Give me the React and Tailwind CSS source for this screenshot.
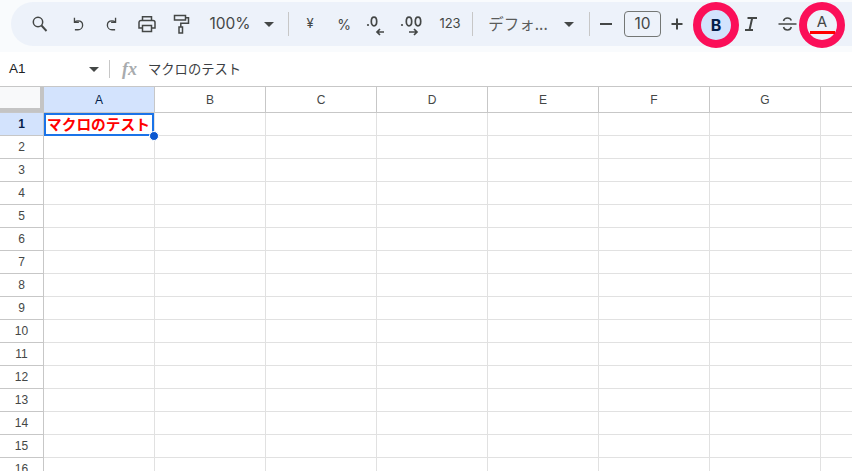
import React from "react";

const Ic = ({ children, w = 18, h = 18, vb = "0 0 18 18", fill = "none", sw = 1.5 }) => (
  <svg width={w} height={h} viewBox={vb} fill={fill} stroke={fill === "none" ? "#444746" : "none"} strokeWidth={sw}>{children}</svg>
);

const Cell = ({ w, children, className = "" }) => (
  <div style={{ width: w }} className={"flex h-full shrink-0 items-center justify-center " + className}>{children}</div>
);

const Sep = () => <div className="h-[24px] w-px shrink-0 bg-[#c7c7c7]" />;
const Caret = () => <div className="h-0 w-0 border-x-[5px] border-t-[5px] border-x-transparent border-t-[#444746]" />;

const Toolbar = () => (
  <div className="ml-[11px] flex h-[44px] items-center rounded-l-[22px] bg-[#edf2fa] pl-[12px] text-[#444746]">
    <Cell w={34}>
      <Ic w={18} h={18}><circle cx="7" cy="7" r="4.7" /><path d="M10.500 10.500 15.500 16" strokeWidth="1.900" /></Ic>
    </Cell>
    <Cell w={34} className="ml-[4px]">
      <Ic w={16} h={16} vb="0 0 18 18"><path d="M5 2v5h5" /><path d="M5.300 6.800C6.300 5.900 7.500 5.500 9 5.500c3 0 5.200 2 5.200 4.800S12 15.500 9 15.500H5.500" /></Ic>
    </Cell>
    <Cell w={34}>
      <Ic w={16} h={16} vb="0 0 18 18"><path d="M13 2v5H8" /><path d="M12.700 6.800C11.700 5.900 10.500 5.500 9 5.500c-3 0-5.200 2-5.200 4.800S6 15.500 9 15.500h3.500" /></Ic>
    </Cell>
    <Cell w={34} className="ml-[1px]">
      <Ic w={20} h={20} vb="0 0 20 20"><path d="M5.500 6.500V2.800h9v3.700" /><path d="M5 14H2V8.500A2 2 0 0 1 4 6.500h12a2 2 0 0 1 2 2V14H15" /><path d="M5.500 11.500h9v6h-9z" /></Ic>
    </Cell>
    <Cell w={34}>
      <Ic w={18} h={20} vb="0 0 18 20"><path d="M2.500 1.500h11v4.500h-11z" /><path d="M13.500 3.800H16.500V9.200H8.800V13" /><path d="M7 13h3.500v6H7z" /></Ic>
    </Cell>
    <Cell w={55} className="pl-[9px] font-['Inter',sans-serif]"><span className="text-[15.500px]">100%</span></Cell>
    <Cell w={32}><Caret /></Cell>
    <Cell w={7}><Sep /></Cell>
    <Cell w={36} className="text-[13px] font-['Inter',sans-serif]">¥</Cell>
    <Cell w={32} className="text-[14px] font-['Inter',sans-serif]">%</Cell>
    <Cell w={36}>
      <Ic w={26} h={24} vb="0 0 26 24" sw={1.5}>
        <circle cx="3" cy="13" r="1.100" fill="#444746" stroke="none" />
        <ellipse cx="9" cy="9.500" rx="2.700" ry="4.300" strokeWidth="1.700" />
        <path d="M20 21h-7M16 18l-3 3 3 3" strokeWidth="1.700" transform="translate(-1 -1)" />
      </Ic>
    </Cell>
    <Cell w={36}>
      <Ic w={30} h={24} vb="0 0 30 24" sw={1.5}>
        <circle cx="3" cy="13" r="1.100" fill="#444746" stroke="none" />
        <ellipse cx="10" cy="9.500" rx="2.700" ry="4.300" strokeWidth="1.700" />
        <ellipse cx="19" cy="9.500" rx="2.700" ry="4.300" strokeWidth="1.700" />
        <path d="M10 20h8M15 17l3 3-3 3" strokeWidth="1.700" />
      </Ic>
    </Cell>
    <Cell w={36} className="text-[13px] font-['Inter',sans-serif]">123</Cell>
    <Cell w={8}><Sep /></Cell>
    <Cell w={76} className="pl-[8px] text-[15.500px] font-['Noto_Sans_CJK_JP',sans-serif] text-[#5a5c5b]">デフォ...</Cell>
    <Cell w={33}><Caret /></Cell>
    <Cell w={8}><Sep /></Cell>
    <Cell w={26}><div className="h-[2px] w-[12px] bg-[#444746]" /></Cell>
    <div className="ml-[5px] flex h-[26px] w-[37px] shrink-0 items-center justify-center rounded-[4px] border border-[#747775] font-['Inter',sans-serif] text-[15.500px]">10</div>
    <Cell w={32}>
      <Ic w={12} h={12} vb="0 0 12 12" sw={2}><path d="M6 .5v11M.5 6h11" /></Ic>
    </Cell>
    <Cell w={41} />
    <Cell w={34}>
      <Ic w={14} h={16} vb="0 0 14 16" sw={2}><path d="M3.500 2h9.500M1 14h8M8.200 2 5.500 14" /></Ic>
    </Cell>
    <Cell w={38}>
      <Ic w={19} h={16} vb="0 0 19 16" sw={1.500}><path d="M.5 8h18M5.500 5C6 3 8 2 9.500 2s3.300 1 3.800 2.500M5.500 11C6 13 8 14 9.500 14s3.300-1 3.800-3" /></Ic>
    </Cell>
    <Cell w={32} />
  </div>
);

const Overlays = () => (
  <>
    <div className="absolute left-[693px] top-[2px] flex h-[46px] w-[46px] items-center justify-center rounded-full border-[8px] border-[#fb0f59] bg-[#d3e3fd]">
      <span className="text-[16px] font-bold font-['Inter',sans-serif] text-[#041e49]">B</span>
    </div>
    <div className="absolute left-[799px] top-[2px] flex h-[46px] w-[46px] flex-col items-center rounded-full border-[8px] border-[#fb0f59] bg-[#edf2fa]">
      <span className="mt-[3px] text-[15px] leading-[18px] font-['Inter',sans-serif] text-[#444746]">A</span>
      <div className="absolute left-[3px] top-[21px] h-[3px] w-[25px] bg-[#ff0000]" />
    </div>
  </>
);

const FormulaBar = () => (
  <div className="flex h-[34px] items-center text-[#202124]">
    <div className="w-[79px] pl-[9px] text-[13.500px] font-['Liberation_Sans',sans-serif]">A1</div>
    <div className="flex w-[30px] justify-center"><Caret /></div>
    <div className="h-[18px] w-px bg-[#c7c7c7]" />
    <span className="ml-[12px] w-[26px] font-['Liberation_Serif',serif] text-[18px] font-bold italic text-[#a8abae]">fx</span>
    <span className="text-[13.300px] font-['Noto_Sans_CJK_JP',sans-serif] text-[#3c4043]">マクロのテスト</span>
  </div>
);

const cols = ["A", "B", "C", "D", "E", "F", "G", ""];
const rows = Array.from({ length: 16 }, (_, i) => i + 1);

const Grid = () => (
  <div className="border-t border-[#c7c7c7] font-['Liberation_Sans',sans-serif]">
    <div className="flex h-[26px] border-b border-[#c7c7c7]">
      <div className="w-[44px] shrink-0 border-r-[4px] border-b-[4px] border-[#c4c4c4] bg-[#f8f9fa]" />
      {cols.map((c, i) => (
        <div key={i} className={"flex w-[111px] shrink-0 items-center justify-center border-r border-[#c7c7c7] text-[12px] " + (i === 0 ? "bg-[#d3e3fd] font-medium text-[#041e49]" : "text-[#444746]")}>{c}</div>
      ))}
    </div>
    {rows.map((r) => (
      <div key={r} className="flex h-[23px] shrink-0">
        <div className={"flex w-[44px] shrink-0 items-center justify-center border-r border-b border-[#c7c7c7] text-[12px] " + (r === 1 ? "bg-[#d3e3fd] font-bold text-[#041e49]" : "text-[#444746]")}>{r}</div>
        {cols.map((c, i) => (
          <div key={i} className="w-[111px] shrink-0 border-r border-b border-[#e1e1e1]" />
        ))}
      </div>
    ))}
  </div>
);

const Selection = () => (
  <div className="absolute left-[44px] top-[113px] flex h-[23px] w-[110px] items-center overflow-visible border-2 border-[#1a73e8] bg-white">
    <span className="whitespace-nowrap pl-[1px] text-[14.700px] font-bold text-[#ff0000] font-['Noto_Sans_CJK_JP',sans-serif] leading-none">マクロのテスト</span>
    <div className="absolute -bottom-[7px] -right-[7px] h-[10px] w-[10px] rounded-full border border-white bg-[#0b57d0]" />
  </div>
);

export default function App() {
  return (
    <div className="relative h-[471px] w-[852px] overflow-hidden bg-white">
      <div className="bg-[#f9fbfd] pb-[6px] pt-[2px]">
        <Toolbar />
      </div>
      <FormulaBar />
      <Grid />
      <Selection />
      <Overlays />
    </div>
  );
}
